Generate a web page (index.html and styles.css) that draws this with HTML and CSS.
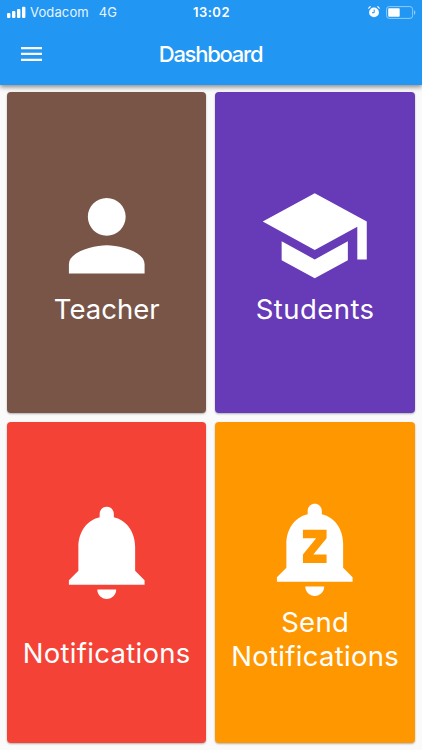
FILE: index.html
```
<!DOCTYPE html>
<html lang="en">
<head>
<meta charset="utf-8">
<title>Dashboard</title>
<link rel="stylesheet" href="styles.css">
</head>
<body>
<header class="app-header">
  <div class="status">
    <div class="status-left">
      <svg class="signal" viewBox="0 0 19 12"><rect x="0" y="7" width="3.4" height="5" rx="1"/><rect x="5" y="5" width="3.4" height="7" rx="1"/><rect x="10" y="3" width="3.4" height="9" rx="1"/><rect x="15" y="0.8" width="3.4" height="11.2" rx="1"/></svg>
      <span class="carrier">Vodacom</span>
      <span class="network">4G</span>
    </div>
    <span class="clock">13:02</span>
    <div class="status-right">
      <svg class="alarm" viewBox="0 0 12 12"><circle cx="6" cy="6.4" r="4.9"/><path d="M.5 3.2A2 2 0 0 1 3.2.6zM11.5 3.2A2 2 0 0 0 8.8.6z"/><path class="hands" d="M6.2 3.5v3.2H4"/></svg>
      <svg class="battery" viewBox="0 0 30 13"><rect class="shell" x=".6" y=".6" width="26" height="11.8" rx="2.6"/><rect x="2.2" y="2.2" width="11.5" height="8.6" rx=".8"/><path class="cap" d="M28 4.2c1.8.7 1.8 3.9 0 4.6z"/></svg>
    </div>
  </div>
  <div class="toolbar">
    <svg class="menu" viewBox="0 0 21 14"><path d="M0 0h21v2.3H0zM0 5.8h21v2.3H0zM0 11.7h21V14H0z"/></svg>
    <h1 class="title">Dashboard</h1>
    <span></span>
  </div>
</header>
<main class="grid">
  <section class="card teacher">
    <svg class="icon" viewBox="0 0 24 24"><path d="M12 12c2.21 0 4-1.79 4-4s-1.79-4-4-4-4 1.79-4 4 1.79 4 4 4zm0 2c-2.67 0-8 1.34-8 4v2h16v-2c0-2.66-5.33-4-8-4z"/></svg>
    <span class="label">Teacher</span>
  </section>
  <section class="card students">
    <svg class="icon" viewBox="0 0 24 24"><path d="M5 13.18v4L12 21l7-3.82v-4L12 17l-7-3.82zM12 3L1 9l11 6 9-4.91V17h2V9L12 3z"/></svg>
    <span class="label">Students</span>
  </section>
  <section class="card notifications">
    <svg class="icon" viewBox="0 0 24 24"><path d="M12 22c1.1 0 2-.9 2-2h-4c0 1.1.89 2 2 2zm6-6v-5c0-3.07-1.64-5.64-4.5-6.32V4c0-.83-.67-1.5-1.5-1.5s-1.5.67-1.5 1.5v.68C7.63 5.36 6 7.92 6 11v5l-2 2v1h16v-1l-2-2z"/></svg>
    <span class="label">Notifications</span>
  </section>
  <section class="card send">
    <svg class="icon" viewBox="0 0 24 24"><path d="M12 22c1.1 0 2-.9 2-2h-4c0 1.1.89 2 2 2zm6-6v-5c0-3.07-1.64-5.64-4.5-6.32V4c0-.83-.67-1.5-1.5-1.5s-1.5.67-1.5 1.5v.68C7.63 5.36 6 7.92 6 11v5l-2 2v1h16v-1l-2-2zm-3.5-6.2l-2.8 3.4h2.8V15h-5v-1.8l2.8-3.4H9.5V8h5v1.8z"/></svg>
    <span class="label"><span>Send</span><span>Notifications</span></span>
  </section>
</main>
</body>
</html>
```
FILE: styles.css
```
* { box-sizing: border-box; }
body {
  margin: 0;
  height: 750px;
  display: flex;
  flex-direction: column;
  overflow: hidden;
  background: #fafafa;
  color: #fff;
  font-family: Inter, "Liberation Sans", sans-serif;
}
svg { display: block; fill: currentColor; }
.app-header {
  position: relative;
  height: 85px;
  background: #2196f3;
  box-shadow: 0 2px 4px rgba(0, 0, 0, .3), 0 2px 6px rgba(0, 0, 0, .2);
}
.status, .toolbar {
  display: grid;
  grid-template-columns: 1fr auto 1fr;
  align-items: center;
}
.status { height: 24px; padding: 0 6px 0 7px; font-size: 13px; line-height: 24px; }
.status-left, .status-right { display: flex; align-items: center; height: 23px; }
.status-right { justify-content: flex-end; gap: 6px; }
.signal { width: 19px; height: 12px; margin-right: 4px; }
.carrier { letter-spacing: .12px; opacity: .9; }
.network { margin-left: 10px; opacity: .9; }
.clock { font-weight: 600; letter-spacing: .5px; }
.alarm { width: 12px; height: 12px; }
.hands { fill: none; stroke: #2196f3; stroke-width: 1; }
.battery { width: 30px; height: 13px; }
.shell { fill: none; stroke: #90caf9; stroke-width: 1; }
.cap { fill: #90caf9; }
.toolbar { height: 60px; padding: 0 22px 0 21px; }
.menu { width: 21px; height: 14px; }
.title { margin: 0; font-size: 22px; line-height: 28px; font-weight: 500; letter-spacing: -1.25px; }
.grid {
  flex: 1;
  display: grid;
  grid-template-columns: 1fr 1fr;
  grid-template-rows: 1fr 1fr;
  gap: 9px;
  padding: 7.4px 7.2px 7px 7px;
}
.card {
  display: flex;
  flex-direction: column;
  align-items: center;
  border-radius: 4px;
  box-shadow: 0 1px 2px rgba(0, 0, 0, .3);
}
.teacher { background: #795548; }
.students { background: #673ab7; }
.notifications { background: #f44336; }
.send { background: #ff9800; }
.icon { width: 113.5px; height: 113.5px; flex: none; }
.teacher .icon, .students .icon { margin-top: 86.5px; }
.notifications .icon { margin-top: 73px; }
.send .icon { margin-top: 70px; }
.label {
  display: flex;
  flex-direction: column;
  align-items: center;
  margin-top: -1px;
  font-size: 27.5px;
  line-height: 34px;
  letter-spacing: .3px;
  white-space: nowrap;
}
.teacher .label { margin-top: 0; letter-spacing: 0; }
.students .label { margin-top: 0; letter-spacing: .45px; }
.notifications .label { margin-top: 27px; }
```
